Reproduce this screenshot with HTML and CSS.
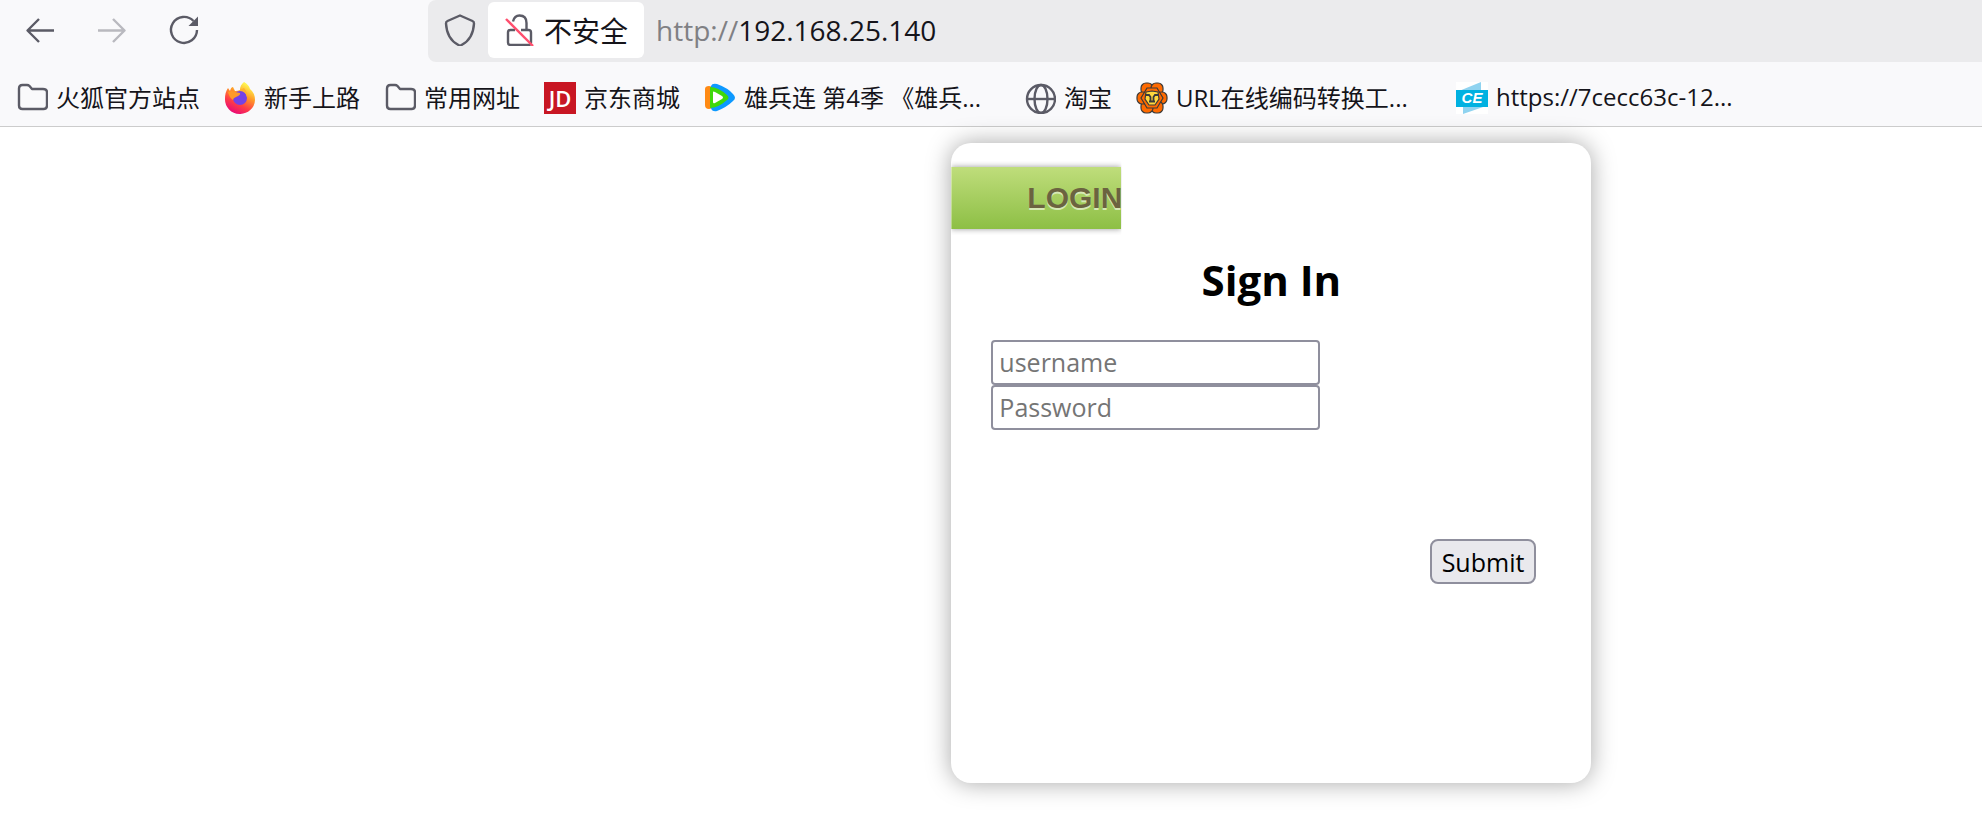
FILE: index.html
```
<!DOCTYPE html>
<html lang="zh-CN">
    <head>
        <meta charset="utf-8">
        <title>Sign In</title>
        <link rel="stylesheet" href="styles.css">
    </head>
    <body>
        <header class="browser">
            <div class="toolbar">
                <nav class="nav-buttons">
                    <button type="button" aria-label="后退">
                        <svg class="icon line" viewBox="0 0 32 32"><path d="M30 16.5H4M15 5L3.500 16.500 15 28"/></svg>
                    </button>
                    <button type="button" aria-label="前进" disabled>
                        <svg class="icon line" viewBox="0 0 32 32"><path d="M2 16.500H28M17 5L28.500 16.500 17 28"/></svg>
                    </button>
                    <button type="button" aria-label="刷新">
                        <svg class="icon line" viewBox="0 0 32 32"><path d="M25.500 7A13 13 0 1 0 29 16"/><path class="solid" d="M30 2.500V12H20.500z"/></svg>
                    </button>
                </nav>
                <div class="urlbar">
                    <svg class="icon line" viewBox="0 0 32 32"><path d="M16 1.500L28.500 7Q30 7.600 30 9.500C29.500 19 25.500 27 17.500 31Q16 31.700 14.500 31C6.500 27 2.500 19 2 9.500Q2 7.600 3.500 7z"/></svg>
                    <button class="insecure" type="button">
                        <svg class="icon line" viewBox="0 0 32 32">
                            <path d="M9 7.500Q10.500 1.500 15.500 1.500Q22.500 1.500 22.500 9V16M11 16H6.500Q4 16 4 18.500V28.500Q4 31 6.500 31H24.500Q27 31 27 28.500V18.500Q27 16 24.500 16H17"/>
                            <path class="slash" d="M2 5L29 32"/>
                        </svg>
                        不安全
                    </button>
                    <label class="scheme" for="address">http://</label>
                    <input class="address" id="address" type="text" value="192.168.25.140">
                </div>
            </div>
            <nav class="bookmarks">
                <a href="#">
                    <svg class="icon line" viewBox="0 0 32 32"><path d="M3 6.500Q3 3 6.500 3H11Q12.500 3 13.500 4L16 7H27Q31 7 31 10.500V23.500Q31 27 27.500 27H6.500Q3 27 3 23.500z"/></svg>
                    <span>火狐官方站点</span>
                </a>
                <a href="#">
                    <svg class="icon" viewBox="0 0 32 32">
                        <defs>
                            <linearGradient id="fire" x1="0.800" y1="0" x2="0.300" y2="1">
                                <stop offset="0.100" stop-color="#fff44f"/>
                                <stop offset="0.400" stop-color="#ff9a27"/>
                                <stop offset="0.700" stop-color="#ff3c47"/>
                                <stop offset="1" stop-color="#e8067a"/>
                            </linearGradient>
                        </defs>
                        <path fill="url(#fire)" d="M20 0Q25 3 26 7Q31 11 31 18A15 14.500 0 0 1 1 17Q1 10 4 6L6 9Q7 5 9 5L11 9Q14 9 16 8Q16 3 20 0z"/>
                        <circle cx="16" cy="16" r="7" fill="#7542e5"/>
                        <path fill="#ff9a27" d="M4 10Q8 8 11 10L16 11Q17 13 12 15Q9 16 9 18Q5 15 4 10z"/>
                        <path fill="#ffb12c" d="M16 8Q22 9 23 15Q24 12 22 9L20 6z"/>
                    </svg>
                    <span>新手上路</span>
                </a>
                <a href="#">
                    <svg class="icon line" viewBox="0 0 32 32"><path d="M3 6.500Q3 3 6.500 3H11Q12.500 3 13.500 4L16 7H27Q31 7 31 10.500V23.500Q31 27 27.500 27H6.500Q3 27 3 23.500z"/></svg>
                    <span>常用网址</span>
                </a>
                <a href="#">
                    <svg class="icon" viewBox="0 0 32 32">
                        <rect width="32" height="32" fill="#c81623"/>
                        <text class="jd" x="16" y="25" text-anchor="middle">JD</text>
                    </svg>
                    <span>京东商城</span>
                </a>
                <a href="#">
                    <svg class="icon" viewBox="0 0 32 32">
                        <path fill="#ff8a14" d="M1 7Q1 4 5 4L10 5V26L5 27Q1 27 1 23z"/>
                        <path fill="#0d99ff" d="M7 4Q8 1 13 2Q24 6 29 12Q33 16 29 19Q23 25 13 29Q8 30 7 26z"/>
                        <path fill="#3fd80b" d="M6 5Q14 5 23 13Q26 16 23 18Q14 26 6 26z"/>
                        <path fill="#fff" d="M9 10Q9 9 11 10L18 14Q20 15.500 18 17L11 21Q9 22 9 20z"/>
                    </svg>
                    <span class="long">雄兵连 第4季 《雄兵...</span>
                </a>
                <a href="#">
                    <svg class="icon line" viewBox="0 0 32 32"><circle cx="17" cy="17" r="14"/><ellipse cx="17" cy="17" rx="6.500" ry="14"/><path d="M3 17H31"/></svg>
                    <span>淘宝</span>
                </a>
                <a href="#">
                    <svg class="icon" viewBox="0 0 32 32">
                        <g fill="#ff6a00" stroke="#3a3a3a" stroke-width="1.200">
                            <rect x="5" y="1" width="12" height="12" rx="5"/>
                            <rect x="15" y="1" width="12" height="12" rx="5"/>
                            <rect x="20" y="10" width="11" height="12" rx="5"/>
                            <rect x="15" y="19" width="12" height="12" rx="5"/>
                            <rect x="5" y="19" width="12" height="12" rx="5"/>
                            <rect x="1" y="10" width="11" height="12" rx="5"/>
                            <path d="M11 6H21L27 16 21 26H11L5 16z"/>
                            <path fill="#ffd83d" d="M10 10L16 9 22 10 23 17 19 23H13L9 17z"/>
                        </g>
                        <path fill="none" stroke="#3a3a3a" stroke-width="1.800" d="M10 13H13L14.500 15V19M22 13H19L17.500 15V19M13 19.500H19"/>
                    </svg>
                    <span class="long">URL在线编码转换工...</span>
                </a>
                <a href="#">
                    <svg class="icon" viewBox="0 0 32 32">
                        <rect width="32" height="32" fill="#fff"/>
                        <path fill="#8fd3f0" d="M3 9L25 0V9zM7 24H30L7 32z"/>
                        <rect y="8" width="32" height="17" fill="#00b1e1"/>
                        <text class="ce" x="16" y="21" text-anchor="middle">CE</text>
                    </svg>
                    <span class="long">https://7cecc63c-12...</span>
                </a>
            </nav>
        </header>
        <main class="page">
            <section class="card">
                <div class="ribbon">LOGIN</div>
                <h2>Sign In</h2>
                <form>
                    <input type="text" placeholder="username" aria-label="username">
                    <input type="password" placeholder="Password" aria-label="Password">
                    <button class="submit" type="submit">Submit</button>
                </form>
            </section>
        </main>
    </body>
</html>
```
FILE: styles.css
```
:root {
    --chrome: #f9f9fb;
    --icon: #5b5b66;
    --text: #15141a;
    --border: #8f8f9d;
}

* {
    box-sizing: border-box;
}

body {
    margin: 0;
    background: #fff;
    color: #000;
    font-family: "Open Sans", "Noto Sans CJK SC", sans-serif;
    font-size: 24px;
}

button, input {
    font: inherit;
}

.icon {
    flex: none;
    display: block;
    width: 32px;
    height: 32px;
}

.line {
    fill: none;
    stroke: var(--icon);
    stroke-width: 2.4;
    stroke-linejoin: round;
}

.line .solid {
    fill: var(--icon);
    stroke: none;
}

.line .slash {
    stroke: #ff4f6e;
}

/** browser toolbar */
.browser {
    background: var(--chrome);
    border-bottom: 1px solid #ccc;
    color: var(--text);
}

.toolbar {
    display: flex;
    height: 62px;
}

.nav-buttons {
    display: flex;
    align-items: center;
    gap: 40px;
    margin-right: 228px;
    padding: 0 0 2px 24px;
}

.nav-buttons button {
    padding: 0;
    border: 0;
    background: none;
}

.nav-buttons button:disabled {
    opacity: 0.4;
}

.urlbar {
    flex: 1;
    display: flex;
    align-items: center;
    padding: 0 0 2px 16px;
    background: #ebebed;
    border-radius: 8px 0 0 8px;
    font-size: 28px;
}

.insecure {
    display: flex;
    align-items: center;
    gap: 8px;
    height: 56px;
    margin: 0 12px;
    padding: 0 16px;
    border: 0;
    border-radius: 6px;
    background: #fff;
    color: var(--text);
    white-space: nowrap;
}

.scheme {
    color: #808084;
}

.address {
    flex: 1;
    min-width: 0;
    padding: 0;
    border: 0;
    outline: 0;
    background: none;
    color: var(--text);
}

/** bookmarks bar */
.bookmarks {
    display: flex;
    align-items: center;
    gap: 24px;
    height: 64px;
    padding: 8px 16px 0;
    overflow: hidden;
}

.bookmarks a {
    display: flex;
    align-items: center;
    gap: 8px;
    color: inherit;
    text-decoration: none;
    white-space: nowrap;
}

.bookmarks span {
    padding-bottom: 3px;
}

.long {
    width: 256px;
}

.jd {
    fill: #fff;
    font: 600 22px "Open Sans", sans-serif;
}

.ce {
    fill: #fff;
    font: italic bold 15px "Liberation Sans", sans-serif;
}

/** login page */
.page {
    padding: 16px 0 48px 48%;
}

.card {
    width: 640px;
    min-height: 640px;
    padding-top: 24px;
    border-radius: 20px;
    background: #fff;
    box-shadow: 0 0 24px rgba(0, 0, 0, 0.35);
}

.ribbon {
    width: 170px;
    padding-left: 76px;
    overflow: hidden;
    background: linear-gradient(#bfdd7b, #8dbf45);
    box-shadow: 0 0 6px rgba(0, 0, 0, 0.4);
    clip-path: inset(-6px 0);
    color: #6b6340;
    font: bold 30px/62px "Liberation Sans", sans-serif;
    text-shadow: 0 2px #d6e8b4;
}

h2 {
    margin: 23px 0 32px;
    font-size: 42px;
    line-height: 56px;
    text-align: center;
}

form {
    display: flex;
    flex-direction: column;
    align-items: flex-start;
    padding: 0 55px 0 40px;
    font-size: 25px;
}

form input {
    width: 329px;
    height: 45px;
    padding: 0 6px 2px;
    border: 2px solid var(--border);
    border-radius: 4px;
    background: #fff;
}

form input::placeholder {
    color: #757575;
}

.submit {
    align-self: flex-end;
    height: 45px;
    margin-top: 109px;
    padding: 0 10px;
    border: 2px solid var(--border);
    border-radius: 8px;
    background: #e9e9ed;
    color: #000;
    line-height: 40px;
}
```
